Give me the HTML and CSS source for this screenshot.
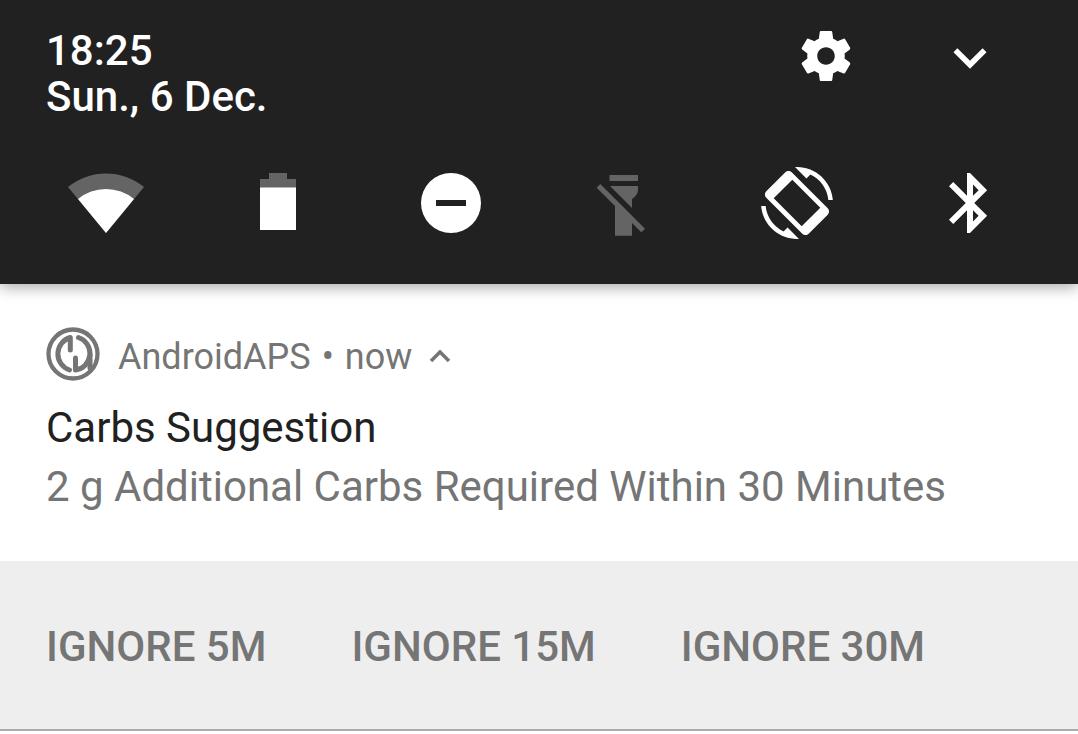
FILE: index.html
```html
<!DOCTYPE html>
<html lang="en">
<head>
	<meta charset="utf-8">
	<meta name="viewport" content="width=device-width, initial-scale=1">
	<title>Notifications</title>
	<link rel="stylesheet" href="styles.css">
</head>
<body>
	<header class="panel">
		<div class="panel-top">
			<div class="clock">
				<p>18:25</p>
				<p>Sun., 6 Dec.</p>
			</div>
			<button class="icon-btn settings" type="button" aria-label="Settings">
				<svg width="60" height="60" viewBox="0 0 24 24"><path d="M19.43 12.98c.04-.32.07-.64.07-.98s-.03-.66-.07-.98l2.11-1.65c.19-.15.24-.42.12-.64l-2-3.46c-.12-.22-.39-.3-.61-.22l-2.49 1c-.52-.4-1.08-.73-1.69-.98l-.38-2.65C14.46 2.18 14.25 2 14 2h-4c-.25 0-.46.18-.49.42l-.38 2.65c-.61.25-1.17.59-1.69.98l-2.49-1c-.23-.09-.49 0-.61.22l-2 3.46c-.13.22-.07.49.12.64l2.11 1.65c-.04.32-.07.65-.07.98s.03.66.07.98l-2.11 1.65c-.19.15-.24.42-.12.64l2 3.46c.12.22.39.3.61.22l2.49-1c.52.4 1.08.73 1.69.98l.38 2.65c.03.24.24.42.49.42h4c.25 0 .46-.18.49-.42l.38-2.65c.61-.25 1.17-.59 1.69-.98l2.49 1c.23.09.49 0 .61-.22l2-3.46c.12-.22.07-.49-.12-.64l-2.11-1.65zM12 15.5c-1.93 0-3.5-1.57-3.5-3.5s1.57-3.5 3.5-3.5 3.5 1.57 3.5 3.5-1.57 3.5-3.5 3.5z"/></svg>
			</button>
			<button class="icon-btn" type="button" aria-label="Expand">
				<svg width="66" height="66" viewBox="0 0 24 24"><path d="M16.59 8.09L12 12.67 7.41 8.09 6 9.500l6 6 6-6z"/></svg>
			</button>
		</div>
		<div class="tiles">
			<button class="icon-btn" type="button" aria-label="Wi-Fi">
				<svg width="76" height="76" viewBox="0 0 76 76">
					<path class="dim" d="M0 22A60 60 0 0 1 76 22L38 68z"/>
					<path d="M10 34A44 44 0 0 1 66 34L38 68z"/>
				</svg>
			</button>
			<button class="icon-btn" type="button" aria-label="Battery">
				<svg width="76" height="76" viewBox="0 0 76 76">
					<path class="dim" d="M29 8h18v6h9v9H20v-9h9z"/>
					<path d="M20 22.500h36V65H20z"/>
				</svg>
			</button>
			<button class="icon-btn" type="button" aria-label="Do not disturb">
				<svg width="76" height="76" viewBox="0 0 76 76"><path fill-rule="evenodd" d="M38 8a30 30 0 1 0 0 60a30 30 0 1 0 0-60zM23 35h30v6H23z"/></svg>
			</button>
			<button class="icon-btn" type="button" aria-label="Flashlight">
				<svg width="76" height="76" viewBox="0 0 76 76">
					<g class="dim">
						<path d="M24.500 10H53v6H24.500z"/>
						<path d="M25 21h28v4c0 4-3 7-6 9v9z"/>
						<path d="M15.300 19l44.700 44.700-3.700 3.600L47 58v12.700H30V41L11.700 22.700z"/>
					</g>
				</svg>
			</button>
			<button class="icon-btn" type="button" aria-label="Auto-rotate">
				<svg width="76" height="76" viewBox="0 0 76 76">
					<g transform="translate(4 2) scale(3)">
						<path d="M16.480 2.520c3.270 1.550 5.610 4.720 5.970 8.480h1.500C23.440 4.840 18.290 0 12 0l-.66.03 3.810 3.810 1.330-1.320z"/>
						<path fill-rule="evenodd" d="M10.230 1.750c-.59-.59-1.540-.59-2.120 0L1.750 8.110c-.59.59-.59 1.540 0 2.120l12.020 12.020c.59.59 1.540.59 2.120 0l6.360-6.360c.59-.59.59-1.540 0-2.120L10.230 1.750zM10.430 4.230L4.230 10.430l9.340 9.340 6.200-6.200z"/>
						<path d="M7.520 21.480C4.250 19.940 1.910 16.760 1.550 13H.05C.56 19.160 5.710 24 12 24l.66-.03-3.810-3.810-1.330 1.320z"/>
					</g>
				</svg>
			</button>
			<button class="icon-btn" type="button" aria-label="Bluetooth">
				<svg width="76" height="76" viewBox="0 0 76 76"><path transform="translate(4 2) scale(3)" d="M17.710 7.710L12 2h-1v7.590L6.410 5 5 6.410 10.590 12 5 17.590 6.410 19 11 14.410V22h1l5.710-5.710-4.300-4.290 4.300-4.290zM13 5.830l1.880 1.880L13 9.590V5.830zm1.880 10.460L13 18.170v-3.760l1.880 1.880z"/></svg>
			</button>
		</div>
	</header>
	<main class="notification">
		<div class="content">
			<div class="app-line">
				<svg class="logo" width="54" height="54" viewBox="0 0 54 54">
					<circle cx="27" cy="27" r="24.500" stroke-width="4.300"/>
					<path stroke-width="5" d="M23.500 43A17 17 0 0 1 24.300 10.500V23"/>
					<path stroke-width="5" d="M32.500 10.500A17 17 0 0 1 44 27V41"/>
					<path stroke-width="5" d="M29.500 31V43C37 42 42 37 44 28"/>
				</svg>
				<div class="meta">
					<span>AndroidAPS</span>
					<span>•</span>
					<span>now</span>
					<button class="icon-btn collapse" type="button" aria-label="Collapse">
						<svg width="24" height="24" viewBox="0 0 24 24"><path d="M3 16l9-9 9 9" fill="none" stroke="#757575" stroke-width="3.500"/></svg>
					</button>
				</div>
			</div>
			<h1>Carbs Suggestion</h1>
			<p class="message">2 g Additional Carbs Required Within 30 Minutes</p>
		</div>
		<div class="actions">
			<button type="button">IGNORE 5M</button>
			<button type="button">IGNORE 15M</button>
			<button type="button">IGNORE 30M</button>
		</div>
	</main>
</body>
</html>
```
FILE: styles.css
```css
*{margin: 0; padding: 0; box-sizing: border-box;}
body{background: #fff; font-family: Roboto, "Liberation Sans", sans-serif; font-size: 42px; color: #757575;}
button{border: 0; background: none; font: inherit; color: inherit; cursor: pointer;}
svg{display: block; flex: none;}

.panel{position: relative; padding-bottom: 43px; background: #212121; color: #fff; box-shadow: 0 3px 14px rgba(0,0,0,.35);}
.panel-top{display: flex; align-items: flex-start; padding: 26px 75px 0 46px;}
.clock{flex: 1; padding-top: 2px; font-weight: 500; line-height: 46px;}
.icon-btn{display: flex; justify-content: center; align-items: center; fill: #fff;}
.settings{margin-right: 81px;}
.tiles{display: grid; grid-template-columns: repeat(6, 1fr); padding: 45px 24px 0 20px;}
.dim{fill: #646464;}

.content{padding: 43px 46px 45px;}
.app-line{display: flex; align-items: center; gap: 18px; height: 54px; font-size: 36px;}
.logo{fill: none; stroke: #757575; stroke-linecap: round; stroke-linejoin: round;}
.meta{display: flex; align-items: center; gap: 11px; padding-top: 6px;}
.collapse{margin-left: 5px;}
h1{margin-top: 17px; font-size: 42px; font-weight: 400; line-height: 59px; color: #212121;}
.message{line-height: 59px;}

.actions{display: flex; gap: 85px; padding: 0 46px; background: #eee; border-bottom: 2px solid #acacac;}
.actions button{height: 168px; padding-top: 2px; font-weight: 500;}
```
